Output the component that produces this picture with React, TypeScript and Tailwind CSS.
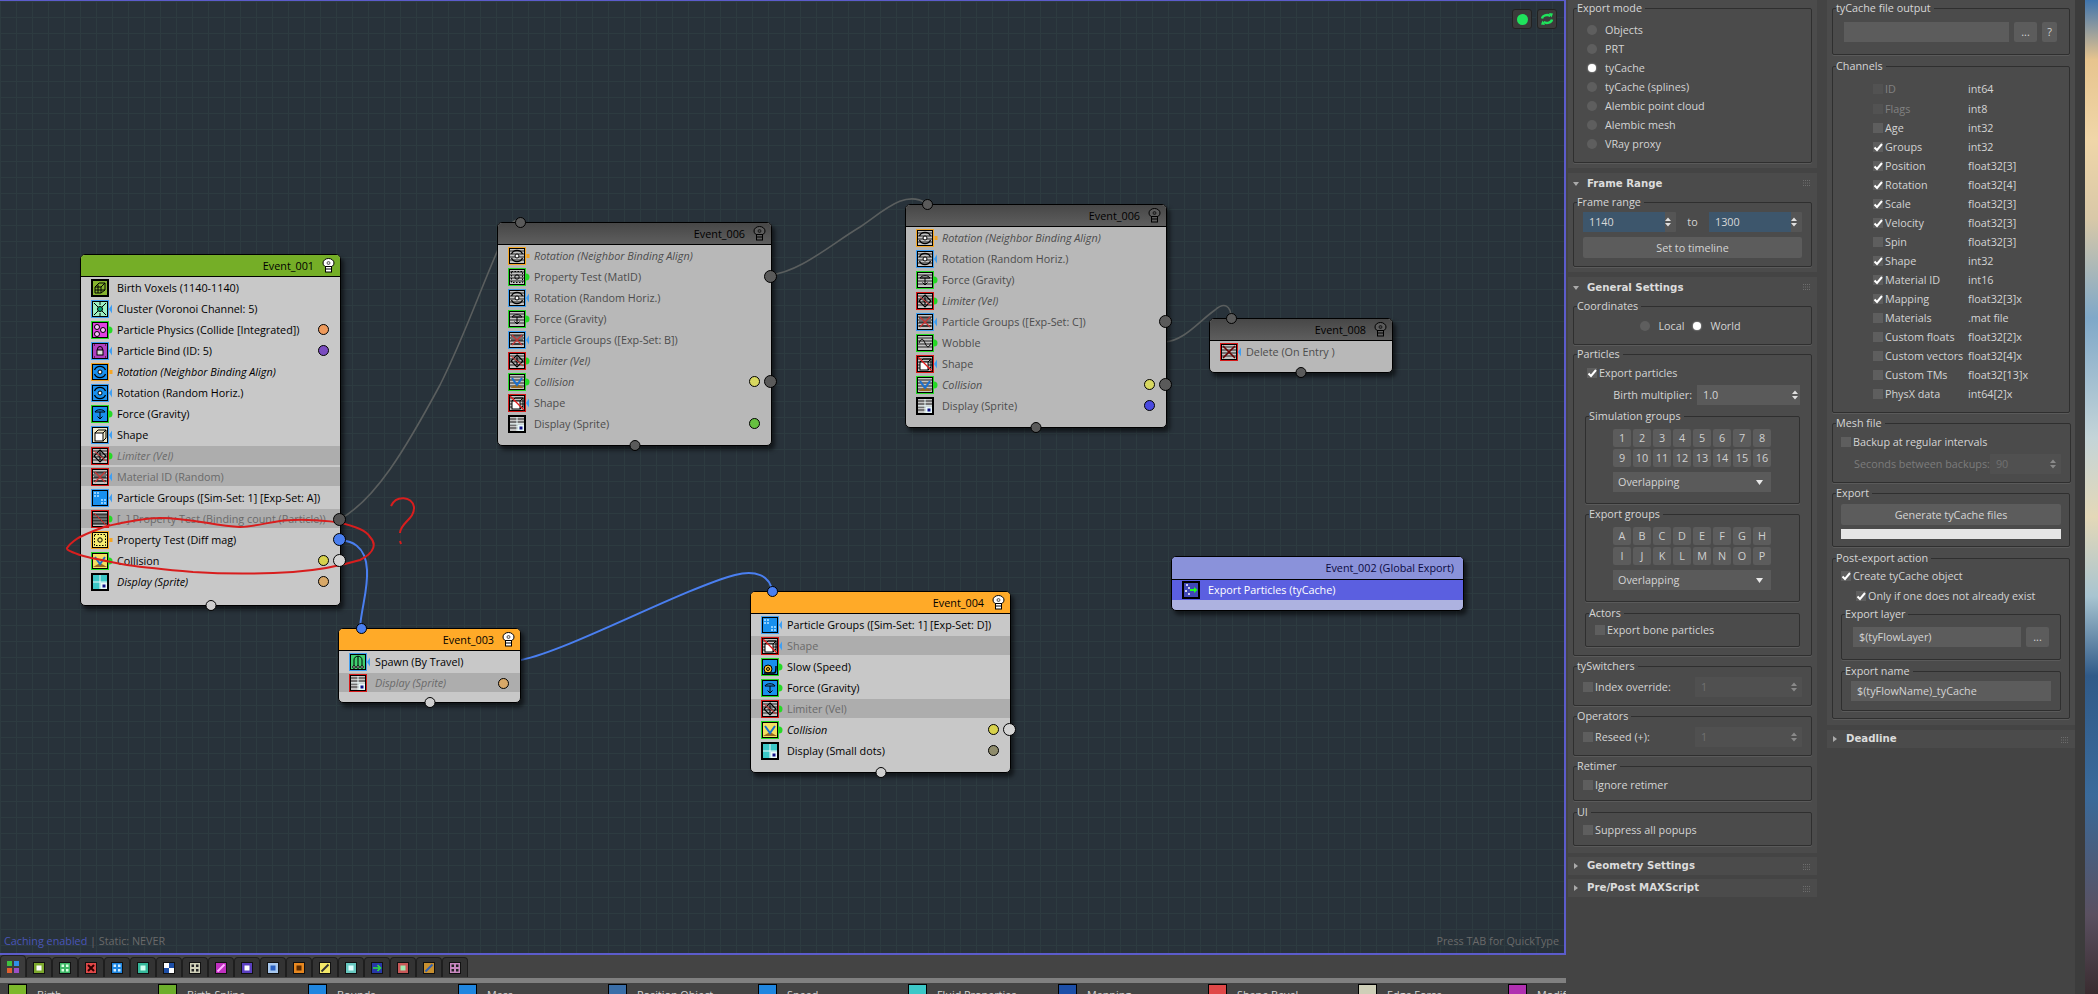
import React from "react";

type Kind = "voxel" | "cluster" | "physics" | "bind" | "rotation" | "force" | "shape" | "limiter" | "material" | "groups" | "test" | "testb" | "collision" | "display" | "spawn" | "slow" | "wobble" | "del" | "export";

const FILL: Record<Kind, string> = {
  voxel: "#86b32e",
  cluster: "#9df0c2",
  physics: "#e040e0",
  bind: "#b040c0",
  rotation: "#1890ee",
  force: "#1890ee",
  shape: "#eee7c8",
  limiter: "#e8e8e8",
  material: "#e8e8e8",
  groups: "#1890ee",
  test: "#f8ee70",
  testb: "#ededed",
  collision: "#f4e060",
  display: "#3cc8c8",
  spawn: "#40d070",
  slow: "#1890ee",
  wobble: "#f0a8d0",
  del: "#e8e8e8",
  export: "#4048b8",
};

const RING: Record<string, string> = {
  o: "#f5a623",
  g: "#26d926",
  b: "#3f9ff2",
  r: "#d81818",
  n: "#000000",
};

function Glyph({ kind }: { kind: Kind }) {
  const s = { stroke: "#000", fill: "none", strokeWidth: 1 };
  switch (kind) {
    case "voxel":
      return <path d="M4 8l4-4h6v7l-4 3H4zM4 8h6v6M10 8l4-4M7 5.5V14M4 11h10" {...s} />;
    case "cluster":
      return <g {...s}><circle cx="9" cy="9" r="2.5" fill="#0a7" /><path d="M3 3l4 4M15 3l-4 4M3 15l4-4M15 15l-4-4M9 2v3M9 13v3" /></g>;
    case "physics":
      return <g stroke="#000" fill="#f8c0f8"><circle cx="6" cy="6" r="2.5" /><circle cx="12" cy="9" r="2.5" /><circle cx="6" cy="13" r="2.5" /></g>;
    case "bind":
      return <g {...s}><circle cx="9" cy="7" r="2.5" /><rect x="6" y="8" width="6" height="5" fill="#ddd" /><path d="M3 3h1M14 3h1M3 15h1M14 15h1" /></g>;
    case "rotation":
      return <g {...s}><circle cx="9" cy="9" r="2" fill="#fff" /><path d="M3.5 7a6 6 0 0 1 11 0M14.5 11a6 6 0 0 1-11 0" strokeWidth="1.3" /></g>;
    case "force":
      return <g {...s}><path d="M4 7c1-3 9-3 10 0zM9 7v7M6.5 11.5L9 14l2.5-2.5" /></g>;
    case "shape":
      return <g {...s}><rect x="4" y="7" width="8" height="8" fill="#fff" /><path d="M4 7l3-3h8v8l-3 3M12 7l3-3" /></g>;
    case "limiter":
      return <g {...s}><path d="M9 3l6 6-6 6-6-6zM9 5v8M6.5 9h5" strokeWidth="1.2" /><path d="M3 4l12 10" stroke="#d33" /></g>;
    case "material":
      return <g {...s}><path d="M3 5h12M3 9h12M3 13h12" /><path d="M4 4l10 10M14 4L4 14" stroke="#c33" strokeWidth="1.2" /></g>;
    case "groups":
      return <g fill="#8fd0ff"><rect x="3" y="3" width="2" height="2" /><rect x="6" y="3" width="2" height="2" /><rect x="3" y="6" width="2" height="2" /><rect x="6" y="6" width="2" height="2" /><rect x="10" y="10" width="2" height="2" /><rect x="13" y="10" width="2" height="2" /><rect x="10" y="13" width="2" height="2" /><rect x="13" y="13" width="2" height="2" /></g>;
    case "test":
      return <g {...s}><rect x="3.5" y="3.5" width="11" height="11" strokeDasharray="1.5 1.5" /><circle cx="9" cy="9" r="2.2" /></g>;
    case "testb":
      return <g {...s}><path d="M2 5h14M2 8h14M2 11h14M2 14h14" /><path d="M3 3l12 12" stroke="#d22" /></g>;
    case "collision":
      return <g><path d="M2 15l7-4 7 4z" fill="#9a6a20" /><path d="M4 5l5 7 5-7" stroke="#1a70d0" strokeWidth="2" fill="none" /></g>;
    case "display":
      return <g><path d="M9 2v14M2 9h14" stroke="#e8f8f8" strokeWidth="1" /><rect x="9.5" y="9.5" width="6.5" height="6.5" fill="#e8f8f8" /><rect x="11.5" y="11.5" width="3" height="3" fill="#118" /></g>;
    case "spawn":
      return <g {...s}><path d="M5 7c0-5 8-5 8 0M5 7v6M13 7v6M9 4v9" /><circle cx="5" cy="14" r="1.3" fill="#fff" /><circle cx="13" cy="14" r="1.3" fill="#fff" /><circle cx="9" cy="14" r="1.3" fill="#fff" /></g>;
    case "slow":
      return <g stroke="#000"><circle cx="7" cy="11" r="4" fill="#f5c030" /><path d="M3 15h10c2 0 2-3 2-7" fill="none" strokeWidth="1.4" /><circle cx="7" cy="11" r="1.5" fill="none" /></g>;
    case "wobble":
      return <path d="M3 9c2-5 4-5 6 0s4 5 6 0" {...s} />;
    case "del":
      return <path d="M3 3l12 12M15 3L3 15" stroke="#600" strokeWidth="1.6" />;
    case "export":
      return <g><path d="M8 9h6" stroke="#2f2" strokeWidth="2" /><path d="M12 6l3.5 3-3.5 3z" fill="#2f2" /><g fill="#fff"><circle cx="5" cy="4" r="1" /><circle cx="7" cy="7" r="1" /><circle cx="4" cy="10" r="1" /><circle cx="7" cy="13" r="1" /></g></g>;
  }
}

function Icon({ kind, ring, nub, off, cross }: { kind: Kind; ring: string; nub?: string; off?: boolean; cross?: boolean }) {
  const col = RING[ring];
  const nubCol = nub ? RING[nub] : "";
  return (
    <svg width="22" height="18" viewBox="0 0 22 18" className="shrink-0">
      <rect x="0.75" y="0.75" width="16.5" height="16.5" fill={off ? "#c4c4c4" : FILL[kind]} stroke={col} strokeWidth="1.5" />
      <rect x="1.5" y="1.5" width="15" height="15" fill="none" stroke="#000" strokeWidth="1" />
      {off && (
        <path d="M2 4h14M2 7h14M2 10h14M2 13h14" stroke="#222" strokeWidth="1" />
      )}
      <Glyph kind={kind} />
      {cross && <path d="M2 2l14 14" stroke="#e01818" strokeWidth="1.2" />}
      {nub === "o" && <rect x="18.5" y="7" width="3" height="4" fill={nubCol} />}
      {nub === "g" && <path d="M18 5.5a3.5 3.5 0 0 1 0 7z" fill={nubCol} />}
      {nub === "b" && <path d="M21 4.5v9L18 9z" fill={nubCol} />}
    </svg>
  );
}

function Bulb({ dark }: { dark?: boolean }) {
  const f = dark ? "#5c5c5c" : "#ffffff";
  return (
    <svg width="13" height="15" viewBox="0 0 13 15" className="shrink-0">
      <ellipse cx="6.5" cy="5" rx="5.5" ry="4.5" fill={f} stroke="#000" />
      <rect x="3.5" y="8.5" width="6" height="5.5" fill={f} stroke="#000" />
      <path d="M3.5 11h6" stroke="#000" />
      <circle cx="6.5" cy="5" r="1.5" fill={dark ? "#444" : "#ddd"} stroke="#000" strokeWidth="0.6" />
    </svg>
  );
}

type Row = {
  t: string;
  k: Kind;
  r?: string;
  n?: string;
  i?: boolean;
  dim?: boolean;
  off?: boolean;
  x?: boolean;
  dot?: string;
  out?: string;
};

function NodeRow({ row, muted }: { row: Row; muted?: boolean }) {
  const text = row.dim ? "text-[#6a6a6a]" : muted ? "text-[#4c4c4c]" : "text-black";
  return (
    <div className={`relative h-[21px] flex items-center pl-[10px] ${row.dim ? "bg-[#adadad] border-y border-y-[#c8c8c8]" : ""}`}>
      <Icon kind={row.k} ring={row.r ?? "n"} nub={row.n} off={row.off} cross={row.x} />
      <span className={`ml-[4px] whitespace-nowrap ${text} ${row.i ? "italic" : ""}`}>{row.t}</span>
      {row.dot && (
        <span className="absolute right-[11px] top-[5px] w-[11px] h-[11px] rounded-full border border-black" style={{ backgroundColor: row.dot }} />
      )}
      {row.out && (
        <span className="absolute right-[-6px] top-[4px] w-[13px] h-[13px] rounded-full border border-black z-10" style={{ backgroundColor: row.out }} />
      )}
    </div>
  );
}

function FlowNode({ name, place, head, body, rows, bulbDark, muted, topSocket, socket }: {
  name: string;
  place: string;
  head: string;
  body: string;
  rows: Row[];
  bulbDark?: boolean;
  muted?: boolean;
  topSocket?: string;
  socket: string;
}) {
  return (
    <div className={`absolute ${place} ${body} rounded-[5px] border border-black shadow-[3px_4px_4px_rgba(0,0,0,0.55)]`}>
      <div className={`h-[22px] ${head} rounded-t-[4px] border-b border-black flex items-center justify-end gap-[8px] pr-[5px] text-black`}>
        <span>{name}</span>
        <Bulb dark={bulbDark} />
      </div>
      {rows.map((r) => (
        <NodeRow key={r.t} row={r} muted={muted} />
      ))}
      {topSocket && (
        <span className={`absolute top-[-6px] ${topSocket} w-[11px] h-[11px] rounded-full border border-black`} style={{ backgroundColor: socket }} />
      )}
      <span className="absolute bottom-[-6px] left-1/2 -translate-x-1/2 w-[11px] h-[11px] rounded-full border border-black" style={{ backgroundColor: socket === "#4a7ff0" ? "#cfcfcf" : socket }} />
    </div>
  );
}

const ROWS_001: Row[] = [
  { t: "Birth Voxels (1140-1140)", k: "voxel", r: "n" },
  { t: "Cluster (Voronoi Channel: 5)", k: "cluster", r: "b", n: "b" },
  { t: "Particle Physics (Collide [Integrated])", k: "physics", r: "g", n: "g", dot: "#ee9a5c" },
  { t: "Particle Bind (ID: 5)", k: "bind", r: "b", n: "b", dot: "#7a4cc0" },
  { t: "Rotation (Neighbor Binding Align)", k: "rotation", r: "o", n: "o", i: true },
  { t: "Rotation (Random Horiz.)", k: "rotation", r: "b", n: "b" },
  { t: "Force (Gravity)", k: "force", r: "g", n: "g" },
  { t: "Shape", k: "shape", r: "b", n: "b" },
  { t: "Limiter (Vel)", k: "limiter", r: "r", n: "g", i: true, dim: true, off: true },
  { t: "Material ID (Random)", k: "material", r: "r", n: "b", dim: true, off: true },
  { t: "Particle Groups ([Sim-Set: 1] [Exp-Set: A])", k: "groups", r: "b", n: "b" },
  { t: "[..] Property Test (Binding count (Particle))", k: "testb", r: "r", n: "g", dim: true, off: true, out: "#555555" },
  { t: "Property Test (Diff mag)", k: "test", r: "o", n: "o", out: "#4a7ff0" },
  { t: "Collision", k: "collision", r: "g", n: "g", dot: "#d8d24c", out: "#d4d4d4" },
  { t: "Display (Sprite)", k: "display", dot: "#d8a868", i: true },
];

const ROWS_006A: Row[] = [
  { t: "Rotation (Neighbor Binding Align)", k: "rotation", r: "o", n: "o", i: true, off: true },
  { t: "Property Test (MatID)", k: "test", r: "g", n: "g", off: true, out: "#5a5a5a" },
  { t: "Rotation (Random Horiz.)", k: "rotation", r: "b", n: "b", off: true },
  { t: "Force (Gravity)", k: "force", r: "g", n: "g", off: true },
  { t: "Particle Groups ([Exp-Set: B])", k: "material", r: "b", n: "b", off: true },
  { t: "Limiter (Vel)", k: "limiter", r: "r", n: "g", i: true, off: true },
  { t: "Collision", k: "collision", r: "g", n: "g", i: true, off: true, dot: "#d8d860", out: "#5a5a5a" },
  { t: "Shape", k: "shape", r: "r", n: "b", off: true, x: true },
  { t: "Display (Sprite)", k: "display", off: true, dot: "#66c040" },
];

const ROWS_006B: Row[] = [
  { t: "Rotation (Neighbor Binding Align)", k: "rotation", r: "o", n: "o", i: true, off: true },
  { t: "Rotation (Random Horiz.)", k: "rotation", r: "b", n: "b", off: true },
  { t: "Force (Gravity)", k: "force", r: "g", n: "g", off: true },
  { t: "Limiter (Vel)", k: "limiter", r: "r", n: "g", i: true, off: true },
  { t: "Particle Groups ([Exp-Set: C])", k: "material", r: "b", n: "b", off: true, out: "#5a5a5a" },
  { t: "Wobble", k: "wobble", r: "g", n: "g", off: true },
  { t: "Shape", k: "shape", r: "r", n: "b", off: true, x: true },
  { t: "Collision", k: "collision", r: "g", n: "g", i: true, off: true, dot: "#d8d860", out: "#5a5a5a" },
  { t: "Display (Sprite)", k: "display", off: true, dot: "#4a4ae0" },
];

const ROWS_004: Row[] = [
  { t: "Particle Groups ([Sim-Set: 1] [Exp-Set: D])", k: "groups", r: "b", n: "b" },
  { t: "Shape", k: "shape", r: "r", n: "b", dim: true, off: true, x: true },
  { t: "Slow (Speed)", k: "slow", r: "g", n: "g" },
  { t: "Force (Gravity)", k: "force", r: "g", n: "g" },
  { t: "Limiter (Vel)", k: "limiter", r: "r", n: "g", dim: true, off: true },
  { t: "Collision", k: "collision", r: "g", n: "g", i: true, dot: "#d8d24c", out: "#d4d4d4" },
  { t: "Display (Small dots)", k: "display", dot: "#8f8c6c" },
];

function Wires() {
  return (
    <svg width="1566" height="954" viewBox="0 0 1566 954" className="absolute left-0 top-0" fill="none">
      <g stroke="#5a5e5e" strokeWidth="1.6">
        <path d="M340 519C375 500 405 450 440 385C465 335 480 290 500 245C508 225 514 218 520 221" />
        <path d="M770 275C800 272 830 245 860 227C885 210 905 190 926 203" />
        <path d="M1165 342C1185 340 1198 322 1215 310C1224 302 1231 305 1231 318" />
      </g>
      <g stroke="#4a7ff0" strokeWidth="2">
        <path d="M339 541C350 540 366 545 367 570C368 590 362 605 360 627" />
        <path d="M521 660C570 650 680 590 735 575C755 570 770 575 772 591" />
      </g>
    </svg>
  );
}

function Scribble() {
  return (
    <svg width="1566" height="954" viewBox="0 0 1566 954" className="absolute left-0 top-0" fill="none">
      <path
        d="M103 527C125 522 145 518 160 518C190 518 215 526 240 527C260 526 275 520 293 520C310 519 325 521 337 522C355 526 367 531 370 537C376 543 376 552 360 560C340 566 320 570 293 572C260 574 225 574 193 572C170 570 148 568 127 565C105 561 90 558 80 555C72 552 66 550 67 548C70 543 78 538 80 537C88 533 95 530 110 525"
        stroke="#d81e1e"
        strokeWidth="2"
      />
      <path d="M391 506C396 495 412 496 414 507C415 519 400 523 400 533M400 541l1 3" stroke="#d81e1e" strokeWidth="2" />
    </svg>
  );
}

function Canvas() {
  return (
    <div className="relative h-[956px] border-t border-r-2 border-b-2 border-[#5c5ccc] bg-[#28323a] overflow-hidden bg-[linear-gradient(#2d3b40_1px,transparent_1px),linear-gradient(90deg,#2d3b40_1px,transparent_1px)] bg-[size:16px_16px]">
      <div className="absolute left-0 top-[-1px] w-[1566px] h-[954px]">
        <Wires />
        <FlowNode name="Event_001" place="left-[80px] top-[254px] w-[261px] h-[352px]" head="bg-[#75ae27]" body="bg-[#c8c8c8]" rows={ROWS_001} socket="#cfcfcf" />
        <FlowNode name="Event_006" place="left-[497px] top-[222px] w-[275px] h-[224px]" head="bg-[linear-gradient(#474747,#5e5e5e)]" body="bg-[#b8b8b8]" rows={ROWS_006A} bulbDark muted topSocket="left-[17px]" socket="#5a5a5a" />
        <FlowNode name="Event_006" place="left-[905px] top-[204px] w-[262px] h-[224px]" head="bg-[linear-gradient(#474747,#5e5e5e)]" body="bg-[#b8b8b8]" rows={ROWS_006B} bulbDark muted topSocket="left-[16px]" socket="#5a5a5a" />
        <FlowNode name="Event_008" place="left-[1209px] top-[318px] w-[184px] h-[55px]" head="bg-[linear-gradient(#474747,#5e5e5e)]" body="bg-[#b8b8b8]" rows={[{ t: "Delete (On Entry )", k: "del", r: "r", n: "b", off: true }]} bulbDark muted topSocket="left-[16px]" socket="#5a5a5a" />
        <FlowNode name="Event_003" place="left-[338px] top-[628px] w-[183px] h-[75px]" head="bg-[#ffaa28]" body="bg-[#c8c8c8]" rows={[
          { t: "Spawn (By Travel)", k: "spawn", r: "b", n: "b" },
          { t: "Display (Sprite)", k: "display", r: "r", i: true, dim: true, off: true, dot: "#d8a868" },
        ]} topSocket="left-[17px]" socket="#4a7ff0" />
        <FlowNode name="Event_004" place="left-[750px] top-[591px] w-[261px] h-[182px]" head="bg-[#ffaa28]" body="bg-[#c8c8c8]" rows={ROWS_004} topSocket="left-[16px]" socket="#4a7ff0" />
        <div className="absolute left-[1171px] top-[556px] w-[293px] h-[55px] bg-[#adb2e0] rounded-[5px] border border-black shadow-[3px_4px_4px_rgba(0,0,0,0.55)]">
          <div className="h-[23px] bg-[#8a92da] rounded-t-[4px] border-b border-black flex items-center justify-end pr-[9px] text-[#0a0a40]">Event_002 (Global Export)</div>
          <div className="h-[20px] bg-[#5b5fe0] flex items-center pl-[10px] text-white">
            <Icon kind="export" ring="n" />
            <span className="ml-[4px]">Export Particles (tyCache)</span>
          </div>
        </div>
        {/* markup somebody drew on the screenshot */}
        <Scribble />
        <div className="absolute left-[1512px] top-[9px] w-[20px] h-[20px] rounded-[3px] bg-[#3b3b3b] border border-[#222] flex items-center justify-center">
          <span className="w-[11px] h-[11px] rounded-full bg-[#1fe35c]" />
        </div>
        <div className="absolute left-[1537px] top-[9px] w-[20px] h-[20px] rounded-[3px] bg-[#3b3b3b] border border-[#222] flex items-center justify-center">
          <svg width="14" height="14" viewBox="0 0 14 14" fill="none" stroke="#1fe35c" strokeWidth="2.4">
            <path d="M2 6.5C2.5 3.5 7 2 10.5 4" />
            <path d="M12 7.5C11.5 10.5 7 12 3.5 10" />
            <path d="M9 1l4 .5-1.5 4z" fill="#1fe35c" stroke="none" />
            <path d="M5 13l-4-.5 1.5-4z" fill="#1fe35c" stroke="none" />
          </svg>
        </div>
        <div className="absolute left-[4px] top-[934px] leading-[14px]">
          <span className="text-[#4a56b8]">Caching enabled</span>
          <span className="text-[#6a6a6a]"> | Static: NEVER</span>
        </div>
        <div className="absolute right-[7px] top-[934px] leading-[14px] text-[#6a6a6a]">Press TAB for QuickType</div>
      </div>
    </div>
  );
}

const TABS: [string, string, string][] = [
  ["#7ca82c", "#ffffff", "square"],
  ["#3fb868", "#d8ffe0", "dots"],
  ["#e04848", "#300000", "x"],
  ["#1f86e0", "#d0ecff", "dots"],
  ["#35b89a", "#d0fff0", "square"],
  ["#1d4fa8", "#ffffff", "check"],
  ["#cfcfb8", "#222222", "dots"],
  ["#c030c0", "#ffb0ff", "diag"],
  ["#5a3fc0", "#ffffff", "square"],
  ["#a8c8ee", "#2a60c0", "square"],
  ["#e88820", "#5a2a00", "square"],
  ["#f4e868", "#333333", "diag"],
  ["#68c8c0", "#e0ffff", "square"],
  ["#2838a8", "#30e040", "arrow"],
  ["#c85858", "#a0e8b0", "square"],
  ["#c89030", "#3060b0", "diag"],
  ["#c888c0", "#222222", "dots"],
];

function TabMark({ mark, fg }: { mark: string; fg: string }) {
  if (mark === "x") return <path d="M3 3l6 6M9 3l-6 6" stroke={fg} strokeWidth="2" />;
  if (mark === "diag") return <path d="M2.5 9.5l7-7" stroke={fg} strokeWidth="2" />;
  if (mark === "arrow") return <path d="M2 6h6M6.5 3l3 3-3 3" stroke={fg} strokeWidth="1.6" fill="none" />;
  if (mark === "check") return <path d="M1 1h5v5H1zM6 6h5v5H6z" fill={fg} />;
  if (mark === "dots") return <g fill={fg}><rect x="2.5" y="2.5" width="2.5" height="2.5" /><rect x="7" y="2.5" width="2.5" height="2.5" /><rect x="2.5" y="7" width="2.5" height="2.5" /><rect x="7" y="7" width="2.5" height="2.5" /></g>;
  return <rect x="3.5" y="3.5" width="5" height="5" fill={fg} />;
}

function TabBar() {
  return (
    <div className="flex h-[20px] mt-[2px] items-end">
      <div className="w-[26px] h-[22px] bg-[#3c3c3c] rounded-t-[4px] border border-b-0 border-[#222] flex items-center justify-center">
        <svg width="12" height="12" viewBox="0 0 12 12">
          <rect x="0" y="0" width="5" height="5" fill="#3fc040" />
          <rect x="7" y="0" width="5" height="5" fill="#2f8fe8" />
          <rect x="0" y="7" width="5" height="5" fill="#e06030" />
          <rect x="7" y="7" width="5" height="5" fill="#9a50c8" />
        </svg>
      </div>
      {TABS.map(([bg, fg, mark]) => (
        <div key={bg} className="w-[26px] h-[20px] bg-[#333333] rounded-t-[4px] border border-b-0 border-[#1e1e1e] flex items-center justify-center">
          <svg width="12" height="12" viewBox="0 0 12 12">
            <rect x="0.5" y="0.5" width="11" height="11" fill={bg} stroke="#111" />
            <TabMark mark={mark} fg={fg} />
          </svg>
        </div>
      ))}
    </div>
  );
}

const PALETTE: [string, string][] = [
  ["Birth", "#7cb82c"],
  ["Birth Spline", "#6cae2c"],
  ["Bounds", "#1f86e0"],
  ["Mass", "#1f86e0"],
  ["Position Object", "#3a6ea8"],
  ["Speed", "#1f86e0"],
  ["Fluid Properties", "#3cc8c8"],
  ["Mapping", "#1d4fa8"],
  ["Shape Bevel", "#e04848"],
  ["Edge Force", "#cfcfb8"],
  ["Modifier", "#b030b0"],
];

function Palette() {
  return (
    <div className="flex h-[10px] pl-[8px] overflow-hidden mt-[1px]">
      {PALETTE.map(([label, bg]) => (
        <div key={label} className="w-[150px] flex items-start gap-[10px] shrink-0">
          <div className="w-[19px] h-[19px] border border-black shrink-0" style={{ backgroundColor: bg }} />
          <span className="text-[#d4d4d4] mt-[4px] whitespace-nowrap">{label}</span>
        </div>
      ))}
    </div>
  );
}

function Box({ title, mt, pad, children }: { title: string; mt?: string; pad?: string; children: React.ReactNode }) {
  return (
    <fieldset className={`border border-[#2f2f2f] rounded-[2px] shadow-[0_1px_0_#5a5a5a] ${mt ?? ""}`}>
      <legend className="ml-[3px] pr-[3px] leading-[14px] h-[14px] text-[#d6d6d6]">{title}</legend>
      <div className={pad}>{children}</div>
    </fieldset>
  );
}

function Radio({ label, on, cls }: { label: string; on?: boolean; cls?: string }) {
  return (
    <div className={`h-[19px] flex items-center ${cls ?? ""}`}>
      <span className="w-[10px] h-[10px] flex items-center justify-center shrink-0">
        <span className={on ? "w-[8px] h-[8px] rounded-full bg-white shadow-[0_0_2px_#ccc]" : "w-[10px] h-[10px] rounded-full bg-[#5e5e5e]"} />
      </span>
      <span className="ml-[8px] text-[#d4d4d4]">{label}</span>
    </div>
  );
}

function Check({ label, on, dim, cls }: { label: string; on?: boolean; dim?: boolean; cls?: string }) {
  return (
    <div className={`h-[16px] flex items-center ${cls ?? ""}`}>
      <span className={`relative w-[10px] h-[10px] shrink-0 ${dim ? "bg-[#525252]" : "bg-[#5e5e5e]"} flex items-center justify-center`}>
        {on && (
          <svg width="10" height="10" viewBox="0 0 10 10" className="absolute left-0 top-0">
            <path d="M1.5 5.5L4 8L9 2" stroke="#fff" strokeWidth="2" fill="none" />
          </svg>
        )}
      </span>
      <span className={`ml-[2px] whitespace-nowrap ${dim ? "text-[#828282]" : "text-[#d4d4d4]"}`}>{label}</span>
    </div>
  );
}

function Updown({ dim }: { dim?: boolean }) {
  const c = dim ? "#8a8a8a" : "#e0e0e0";
  return (
    <svg width="6" height="10" viewBox="0 0 6 10">
      <path d="M0 4L3 0.5L6 4zM0 6L3 9.5L6 6z" fill={c} />
    </svg>
  );
}

function Spinner({ value, cls, dim, blue }: { value: string; cls: string; dim?: boolean; blue?: boolean }) {
  return (
    <div className={`h-[20px] flex items-center rounded-[1px] ${blue ? "bg-[#555555]" : dim ? "bg-[#505050]" : "bg-[#5a5a5a]"} ${cls}`}>
      <span className={`flex-1 h-full flex items-center pl-[6px] ${blue ? "bg-[#3d566c] text-[#d8d8d8]" : dim ? "text-[#707070]" : "text-[#d4d4d4]"}`}>{value}</span>
      <span className="w-[11px] flex items-center justify-start"><Updown dim={dim} /></span>
    </div>
  );
}

function Btn({ label, cls }: { label: string; cls: string }) {
  return <div className={`flex items-center justify-center bg-[#5c5c5c] rounded-[2px] text-[#d4d4d4] ${cls}`}>{label}</div>;
}

function Combo({ cls }: { cls?: string }) {
  return (
    <div className={`h-[20px] w-[158px] bg-[#5a5a5a] flex items-center justify-between pl-[5px] pr-[8px] text-[#d4d4d4] ${cls ?? ""}`}>
      <span>Overlapping</span>
      <svg width="7" height="5" viewBox="0 0 7 5"><path d="M0 0h7L3.5 5z" fill="#e8e8e8" /></svg>
    </div>
  );
}

function Cells({ items }: { items: string[] }) {
  return (
    <div className="grid grid-cols-[repeat(8,18px)] gap-[2px]">
      {items.map((c) => (
        <span key={c} className="h-[18px] bg-[#5c5c5c] rounded-[2px] flex items-center justify-center text-[#d0d0d0]">{c}</span>
      ))}
    </div>
  );
}

function RollHead({ title, open, h }: { title: string; open?: boolean; h: string }) {
  return (
    <div className={`${h} relative flex items-center pl-[5px] shrink-0`}>
      <svg width="6" height="6" viewBox="0 0 6 6" className="shrink-0">
        {open ? <path d="M0 1h6L3 5z" fill="#aaa" /> : <path d="M1 0v6l4-3z" fill="#aaa" />}
      </svg>
      <span className="ml-[8px] font-['DejaVu_Sans',sans-serif] font-bold text-[10.2px] text-[#dcdcdc]">{title}</span>
      <svg width="7" height="6" viewBox="0 0 7 6" className="absolute right-[7px] top-[7px]">
        <path d="M0 .5h7M0 3h7M0 5.5h7" stroke="#6e6e6e" strokeDasharray="1 1" />
      </svg>
    </div>
  );
}

const SIM = ["1","2","3","4","5","6","7","8","9","10","11","12","13","14","15","16"];
const EXP = ["A","B","C","D","E","F","G","H","I","J","K","L","M","N","O","P"];
const MODES = ["Objects", "PRT", "tyCache", "tyCache (splines)", "Alembic point cloud", "Alembic mesh", "VRay proxy"];

function LeftColumn() {
  return (
    <div className="w-[249px] flex flex-col gap-[4px]">
      <div className="bg-[#4b4b4b] h-[168px] px-[5px] pt-[1px]">
        <Box title="Export mode" pad="pl-[13px] pt-[5px] pb-[9px]">
          {MODES.map((m) => <Radio key={m} label={m} on={m === "tyCache"} />)}
        </Box>
      </div>
      <div className="bg-[#4b4b4b] h-[99px] mt-[1px] px-[5px]">
        <RollHead title="Frame Range" open h="h-[22px] -mx-[5px]" />
        <Box title="Frame range" pad="px-[9px] pt-[3px] pb-[8px]">
          <div className="flex items-center">
            <Spinner value="1140" cls="w-[93px]" blue />
            <span className="w-[33px] text-center text-[#d4d4d4]">to</span>
            <Spinner value="1300" cls="w-[93px]" blue />
          </div>
          <Btn label="Set to timeline" cls="h-[21px] mt-[5px]" />
        </Box>
      </div>
      <div className="bg-[#4b4b4b] h-[576px] mt-[1px] px-[5px]">
        <RollHead title="General Settings" open h="h-[22px] -mx-[5px]" />
        <Box title="Coordinates" pad="pt-[3px] pb-[9px]">
          <div className="flex justify-center gap-[8px] pr-[4px]">
            <Radio label="Local" />
            <Radio label="World" on />
          </div>
        </Box>
        <Box title="Particles" mt="mt-[2px]" pad="px-[11px] pt-[4px] pb-[8px]">
          <Check label="Export particles" on cls="ml-[2px]" />
          <div className="flex items-center justify-end mt-[4px]">
            <span className="text-[#d4d4d4] mr-[5px]">Birth multiplier:</span>
            <div className="w-[103px] h-[20px] bg-[#5a5a5a] flex items-center justify-between pl-[6px] pr-[2px] text-[#d4d4d4]">
              <span>1.0</span>
              <Updown />
            </div>
          </div>
          <Box title="Simulation groups" mt="mt-[4px]" pad="pl-[27px] pt-[6px] pb-[11px]">
            <Cells items={SIM} />
            <Combo cls="mt-[5px]" />
          </Box>
          <Box title="Export groups" mt="mt-[3px]" pad="pl-[27px] pt-[6px] pb-[11px]">
            <Cells items={EXP} />
            <Combo cls="mt-[5px]" />
          </Box>
          <Box title="Actors" mt="mt-[4px]" pad="pl-[9px] pt-[2px] pb-[8px]">
            <Check label="Export bone particles" />
          </Box>
        </Box>
        <Box title="tySwitchers" mt="mt-[3px]" pad="px-[9px] pt-[4px] pb-[8px]">
          <div className="flex items-center justify-between">
            <Check label="Index override:" />
            <Spinner value="1" dim cls="w-[107px]" />
          </div>
        </Box>
        <Box title="Operators" mt="mt-[3px]" pad="px-[9px] pt-[4px] pb-[8px]">
          <div className="flex items-center justify-between">
            <Check label="Reseed (+):" />
            <Spinner value="1" dim cls="w-[107px]" />
          </div>
        </Box>
        <Box title="Retimer" mt="mt-[3px]" pad="pl-[9px] pt-[4px] pb-[7px]">
          <Check label="Ignore retimer" />
        </Box>
        <Box title="UI" mt="mt-[4px]" pad="pl-[9px] pt-[3px] pb-[7px]">
          <Check label="Suppress all popups" />
        </Box>
      </div>
      <div className="bg-[#4b4b4b]"><RollHead title="Geometry Settings" h="h-[18px]" /></div>
      <div className="bg-[#4b4b4b]"><RollHead title="Pre/Post MAXScript" h="h-[18px]" /></div>
    </div>
  );
}

const CHANNELS: [string, string, boolean, boolean?][] = [
  ["ID", "int64", false, true],
  ["Flags", "int8", false, true],
  ["Age", "int32", false],
  ["Groups", "int32", true],
  ["Position", "float32[3]", true],
  ["Rotation", "float32[4]", true],
  ["Scale", "float32[3]", true],
  ["Velocity", "float32[3]", true],
  ["Spin", "float32[3]", false],
  ["Shape", "int32", true],
  ["Material ID", "int16", true],
  ["Mapping", "float32[3]x", true],
  ["Materials", ".mat file", false],
  ["Custom floats", "float32[2]x", false],
  ["Custom vectors", "float32[4]x", false],
  ["Custom TMs", "float32[13]x", false],
  ["PhysX data", "int64[2]x", false],
];

function RightColumn() {
  return (
    <div className="w-[248px] flex flex-col gap-[5px]">
      <div className="bg-[#4b4b4b] h-[725px] px-[5px] pt-[1px]">
        <Box title="tyCache file output" pad="pl-[11px] pt-[7px] pb-[12px]">
          <div className="flex items-center">
            <div className="w-[165px] h-[20px] bg-[#5c5c5c]" />
            <Btn label="..." cls="w-[23px] h-[20px] ml-[5px]" />
            <Btn label="?" cls="w-[15px] h-[20px] ml-[5px]" />
          </div>
        </Box>
        <Box title="Channels" mt="mt-[4px]" pad="pl-[40px] pt-[5px] pb-[9px]">
          {CHANNELS.map(([name, type, on, dim]) => (
            <div key={name} className={`${name === "ID" ? "h-[21px]" : "h-[19px]"} flex items-center`}>
              <Check label={name} on={on} dim={dim} cls="w-[95px]" />
              <span className="text-[#d4d4d4] whitespace-nowrap">{type}</span>
            </div>
          ))}
        </Box>
        <Box title="Mesh file" mt="mt-[3px]" pad="pl-[8px] pr-[9px] pt-[4px] pb-[8px]">
          <Check label="Backup at regular intervals" />
          <div className="flex items-center justify-between mt-[4px] pl-[13px]">
            <span className="text-[#7c7c7c] whitespace-nowrap">Seconds between backups:</span>
            <Spinner value="90" dim cls="w-[71px]" />
          </div>
        </Box>
        <Box title="Export" mt="mt-[3px]" pad="px-[8px] pt-[4px] pb-[7px]">
          <Btn label="Generate tyCache files" cls="h-[21px]" />
          <div className="h-[10px] mt-[4px] bg-[#e6e6e6]" />
        </Box>
        <Box title="Post-export action" mt="mt-[4px]" pad="px-[8px] pt-[3px] pb-[7px]">
          <Check label="Create tyCache object" on />
          <Check label="Only if one does not already exist" on cls="mt-[4px] ml-[15px]" />
          <Box title="Export layer" mt="mt-[3px]" pad="pl-[11px] pt-[6px] pb-[12px]">
            <div className="flex items-center">
              <div className="w-[168px] h-[20px] bg-[#5c5c5c] flex items-center pl-[6px] text-[#d4d4d4]">$(tyFlowLayer)</div>
              <Btn label="..." cls="w-[23px] h-[20px] ml-[5px]" />
            </div>
          </Box>
          <Box title="Export name" mt="mt-[4px]" pad="px-[9px] pt-[3px] pb-[9px]">
            <div className="h-[20px] bg-[#5c5c5c] flex items-center pl-[6px] text-[#d4d4d4]">$(tyFlowName)_tyCache</div>
          </Box>
        </Box>
      </div>
      <div className="bg-[#4b4b4b]"><RollHead title="Deadline" h="h-[18px]" /></div>
    </div>
  );
}

export default function App() {
  return (
    <div className="w-[2098px] h-[994px] flex overflow-hidden bg-[#444444] font-['Open_Sans',sans-serif] text-[10.8px] leading-[14px]">
      <div className="w-[1566px] shrink-0 flex flex-col">
        <Canvas />
        <TabBar />
        <div className="h-[5px] mt-[1px] bg-[#808080]" />
        <Palette />
      </div>
      <div className="w-[509px] shrink-0 flex pl-[2px] gap-[10px]">
        <LeftColumn />
        <RightColumn />
      </div>
      <div className="w-[10px] shrink-0 bg-[#3c3c3c]" />
      <div className="w-[13px] shrink-0 bg-[linear-gradient(180deg,#3f74ad_0%,#e7c48e_6%,#f0d6a8_14%,#d8c8a8_22%,#7fa8c8_32%,#c4d4d8_44%,#e4d8b8_52%,#a8c4d0_60%,#305a88_68%,#3a6a9a_80%,#5a5060_92%,#3a2c30_100%)]" />
    </div>
  );
}
